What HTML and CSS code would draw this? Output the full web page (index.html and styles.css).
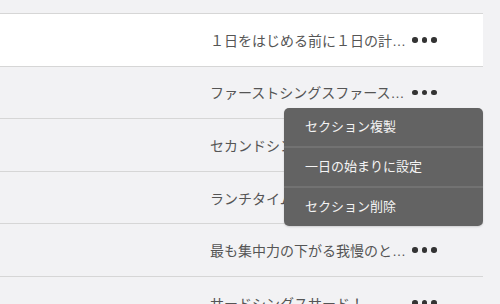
FILE: index.html
```html
<!DOCTYPE html>
<html lang="ja">
<head>
    <meta charset="UTF-8">
    <title>Sections</title>
    <link rel="stylesheet" href="styles.css">
</head>
<body>
    <div class="sections">
        <div class="row current">
            <div class="title">１日をはじめる前に１日の計画を立てる</div>
            <div class="more"><span></span><span></span><span></span></div>
        </div>
        <div class="row">
            <div class="title">ファーストシングスファーストシングス</div>
            <div class="more"><span></span><span></span><span></span></div>
        </div>
        <div class="row">
            <div class="title">セカンドシングスセカンドシングス</div>
            <div class="more"><span></span><span></span><span></span></div>
        </div>
        <div class="row">
            <div class="title">ランチタイムランチタイムランチタイム</div>
            <div class="more"><span></span><span></span><span></span></div>
        </div>
        <div class="row">
            <div class="title">最も集中力の下がる我慢のときを乗り切る</div>
            <div class="more"><span></span><span></span><span></span></div>
        </div>
        <div class="row">
            <div class="title">サードシングスサード！</div>
            <div class="more"><span></span><span></span><span></span></div>
        </div>
    </div>

    <div class="menu">
        <div class="menu-item">セクション複製</div>
        <div class="menu-item">一日の始まりに設定</div>
        <div class="menu-item">セクション削除</div>
    </div>
</body>
</html>
```

FILE: styles.css
```css
body {
    margin: 0;
    background-color: #f2f2f4;
    font-family: "Liberation Sans", "Noto Sans CJK JP", sans-serif;
    position: relative;
    height: 304px;
    overflow: hidden;
}

.sections {
    width: 483px;
    padding-top: 13px;
}

.row {
    display: flex;
    align-items: center;
    height: 51.6px;
    border-top: 1px solid #d6d6d6;
    padding-left: 210px;
}
.row.current {
    background-color: #fff;
    border-bottom: 1px solid #d6d6d6;
}
.row.current + .row {
    border-top: none;
}

.title {
    width: 196px;
    font-size: 14px;
    color: #555;
    white-space: nowrap;
    overflow: hidden;
    text-overflow: ellipsis;
}

.more {
    display: flex;
    gap: 4px;
    margin-left: 6px;
}
.more span {
    width: 5.5px;
    height: 5.5px;
    border-radius: 50%;
    background-color: #333;
}

.menu {
    position: absolute;
    top: 108px;
    left: 284px;
    width: 199px;
    background-color: #636363;
    border-radius: 5px;
    box-shadow: 0 1px 2px rgba(0, 0, 0, 0.15);
}
.menu-item {
    height: 38px;
    line-height: 38px;
    padding-left: 21px;
    font-size: 13px;
    color: #f4f4f4;
}
.menu-item + .menu-item {
    border-top: 2px solid #727272;
}
```
